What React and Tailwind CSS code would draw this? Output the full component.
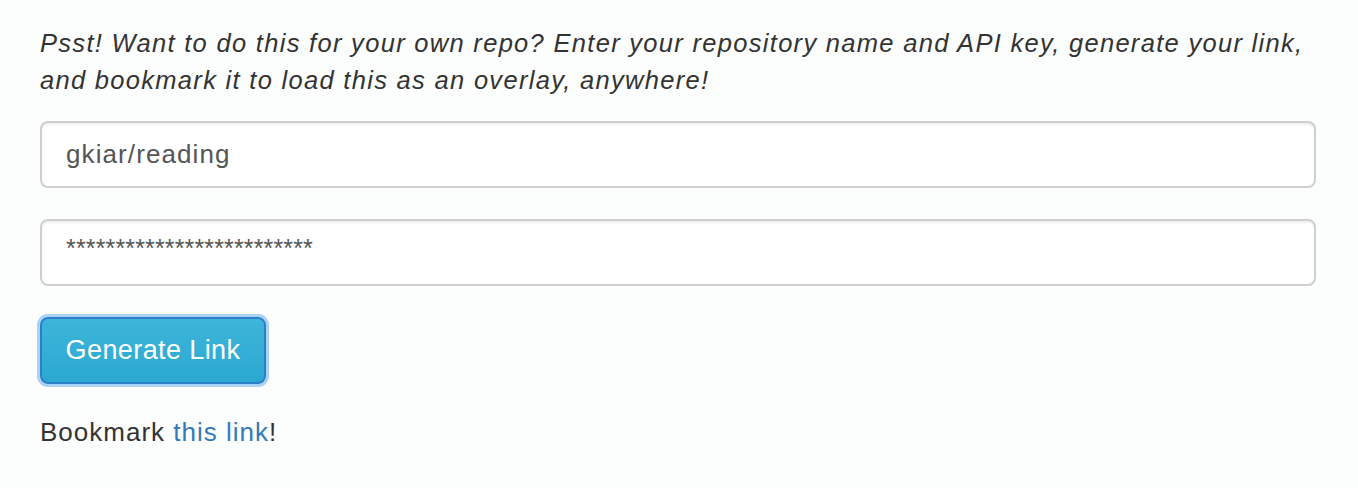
export default function App() {
  return (
    <div className="min-h-[488px] bg-[#fcfdfd] px-10 pt-[25px] font-['Liberation_Sans',Arial,sans-serif] text-[#333]">
      <p className="text-[25.5px] leading-[37px] tracking-[1.3px] italic whitespace-nowrap">
        Psst! Want to do this for your own repo? Enter your repository name and API key, generate your link,
        <br />
        and bookmark it to load this as an overlay, anywhere!
      </p>
      <div className="mt-[22px] flex flex-col gap-[31px]">
        <input
          type="text"
          defaultValue="gkiar/reading"
          className="h-[67px] w-[1276px] rounded-[8px] border-2 border-[#cfcfcf] bg-white px-[24px] text-[26px] tracking-[1.1px] text-[#555] shadow-[inset_0_2px_2px_rgba(0,0,0,0.06)] outline-none"
        />
        <input
          type="text"
          defaultValue="*************************"
          className="h-[67px] w-[1276px] rounded-[8px] border-2 border-[#cfcfcf] bg-white px-[24px] pb-[8px] text-[25px] tracking-[0.15px] text-[#555] shadow-[inset_0_2px_2px_rgba(0,0,0,0.06)] outline-none"
        />
        <div>
          <button className="h-[67px] w-[226px] rounded-[8px] border-2 border-[#2b7fc8] bg-gradient-to-b from-[#3eb5da] to-[#29a8d0] text-[27px] tracking-[0.4px] text-white shadow-[0_0_0_3px_#a9d2f7]">
            Generate Link
          </button>
        </div>
      </div>
      <p className="mt-[30px] text-[26px] leading-[37px] tracking-[1px]">
        Bookmark <a href="#" className="text-[#337ab7]">this link</a>!
      </p>
    </div>
  );
}
